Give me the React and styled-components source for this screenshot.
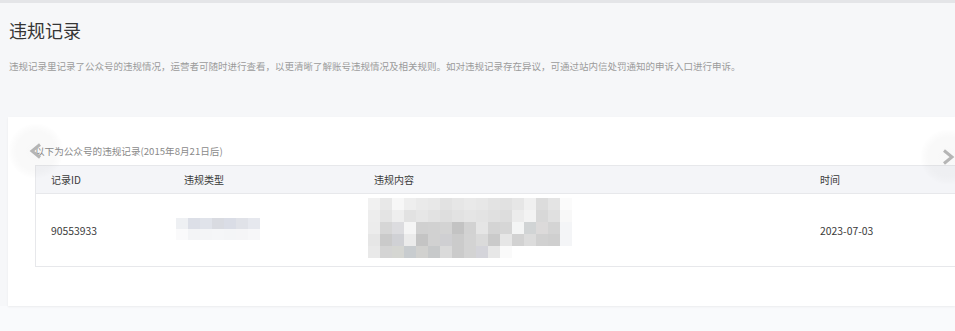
import React from "react";
import styled, { createGlobalStyle } from "styled-components";

const GlobalStyle = createGlobalStyle`
  html, body {
    margin: 0;
    padding: 0;
    background: #f6f7f9;
  }
  body {
    font-family: "Open Sans", "Noto Sans CJK SC", sans-serif;
    color: #333;
  }
`;

const Page = styled.div`
  width: 955px;
  height: 331px;
  overflow: hidden;
  display: flex;
  flex-direction: column;
  background: #f6f7f9;
  border-top: 3px solid #e4e5e8;
  box-sizing: border-box;
`;

const Header = styled.header`
  padding: 15px 0 0 9px;
  height: 114px;
  box-sizing: border-box;
`;

const Title = styled.h1`
  margin: 0;
  font-size: 18px;
  line-height: 24px;
  font-weight: 400;
  color: #353535;
  font-family: "Noto Sans CJK SC", sans-serif;
`;

const Desc = styled.p`
  margin: 17px 0 0;
  font-size: 9.5px;
  line-height: 14px;
  color: #9b9b9b;
  font-family: "Noto Sans CJK SC", sans-serif;
  white-space: nowrap;
`;

const Card = styled.section`
  position: relative;
  margin-left: 8px;
  background: #fff;
  padding: 27px 0 39px 27px;
  box-shadow: 0 1px 2px rgba(0, 0, 0, 0.06);
`;

const Caption = styled.div`
  font-size: 9.6px;
  line-height: 14px;
  color: #8a8a8a;
  margin-bottom: 7px;
  font-family: "Noto Sans CJK SC", sans-serif;
`;

const Table = styled.div`
  border: 1px solid #e7e8eb;
  border-right: none;
  font-size: 10px;
  color: #3a3a3a;
`;

const Row = styled.div`
  display: grid;
  grid-template-columns: 133px 190px 446px 1fr;
  align-items: center;
  height: ${(p) => (p.$head ? "27px" : "72px")};
  background: ${(p) => (p.$head ? "#f4f5f8" : "#fff")};
  border-bottom: ${(p) => (p.$head ? "1px solid #e7e8eb" : "none")};
`;

const Cell = styled.div`
  padding-left: ${(p) => p.$pad || 15}px;
  font-family: "Noto Sans CJK SC", sans-serif;
  font-size: ${(p) => (p.$num ? "10.4px" : "10px")};
`;

const Mosaic = styled.div`
  display: grid;
  grid-template-columns: repeat(${(p) => p.$cols}, 12px);
  grid-auto-rows: ${(p) => p.$h}px;
  margin-left: ${(p) => p.$ml || 0}px;
  margin-top: ${(p) => p.$mt || 0}px;
`;

const Tile = styled.span`
  display: block;
`;

const Footer = styled.div`
  flex: 1;
  background: #f9fafc;
`;

const Nav = styled.div`
  position: absolute;
  top: ${(p) => p.$top}px;
  left: ${(p) => p.$left}px;
  width: 56px;
  height: 56px;
  border-radius: 50%;
  background: radial-gradient(
    circle,
    rgba(0, 0, 0, 0.028) 0%,
    rgba(0, 0, 0, 0.025) 50%,
    rgba(0, 0, 0, 0.012) 62%,
    rgba(0, 0, 0, 0) 71%
  );
  display: flex;
  align-items: center;
  justify-content: center;
`;

const typeShades = [
  ["#eef0f3", "#dcdfe7", "#e0e3ea", "#d9dbe1", "#dadde6", "#e0e2e8", "#e6e8ee"],
  ["#fafafb", "#f3f4f6", "#f4f5f7", "#f5f6f8", "#f4f5f7", "#f5f5f7", "#f7f7f9"],
];

const contentShades = [
  ["#f1f1f1", "#e8e8e8", "#f7f7f7", "#eeeeee", "#eaeaea", "#e8e8e8", "#e2e2e2", "#e6e6e6", "#e9e9e9", "#e7e7e7", "#e3e3e3", "#e1e1e1", "#e6e6e6", "#f0f0f0", "#dcdcdc", "#e4e4e4", "#fbfbfb", "#fff"],
  ["#ededed", "#e4e4e4", "#eeeeee", "#e2e2e2", "#e6e6e6", "#e2e2e2", "#dedede", "#e2e2e2", "#e5e5e5", "#e3e3e3", "#e0e0e0", "#dddddd", "#ececec", "#f3f3f3", "#d8d8d8", "#e0e0e0", "#f8f8f8", "#fff"],
  ["#ececec", "#d6d6d6", "#dcdcdf", "#f5f5f5", "#d0d0d0", "#d1d1d1", "#d3d3d3", "#c3c3c3", "#d2d2d2", "#e5e5e5", "#d4d4d4", "#d6d6d6", "#f4f5f5", "#d1d4d5", "#dcdada", "#d4d4d4", "#f4f5f7", "#fff"],
  ["#e6e6e6", "#cacaca", "#d0d1d5", "#ebebeb", "#c4c4c4", "#d1d1d1", "#cfcfd2", "#cbcbcb", "#d3d3d3", "#dadada", "#cacaca", "#e6e6e6", "#d2d2d2", "#dcdcdc", "#d1d1d1", "#cfcfcf", "#f4f5f7", "#fff"],
  ["#e9e9e9", "#d4d4d4", "#d5d6d2", "#c8cccf", "#d1d1cf", "#c7c9ca", "#dadada", "#cbcbcb", "#d3d3d3", "#d4d4da", "#e7e7e7", "#fafafa", "#fff", "#fff", "#fff", "#fff", "#fff", "#fff"],
];

const Chevron = ({ dir }) => (
  <svg width="14" height="16" viewBox="0 0 14 16">
    <polyline
      points={dir === "left" ? "11,1.5 3,8 11,14.5" : "3,1.5 11,8 3,14.5"}
      fill="none"
      stroke="#b5b5b5"
      strokeWidth="3"
      strokeLinejoin="miter"
    />
  </svg>
);

function renderMosaic(shades, h, ml, mt) {
  return (
    <Mosaic $cols={shades[0].length} $h={h} $ml={ml} $mt={mt}>
      {shades.flatMap((row, r) =>
        row.map((c, i) => <Tile key={`${r}-${i}`} style={{ background: c }} />)
      )}
    </Mosaic>
  );
}

function App() {
  return (
    <>
      <GlobalStyle />
      <Page>
        <Header>
          <Title>违规记录</Title>
          <Desc>
            违规记录里记录了公众号的违规情况，运营者可随时进行查看，以更清晰了解账号违规情况及相关规则。如对违规记录存在异议，可通过站内信处罚通知的申诉入口进行申诉。
          </Desc>
        </Header>
        <Card>
          <Caption>以下为公众号的违规记录(2015年8月21日后)</Caption>
          <Table>
            <Row $head>
              <Cell>记录ID</Cell>
              <Cell>违规类型</Cell>
              <Cell>违规内容</Cell>
              <Cell>时间</Cell>
            </Row>
            <Row>
              <Cell $num>90553933</Cell>
              <Cell $pad={7}>{renderMosaic(typeShades, 11, 0, -2)}</Cell>
              <Cell $pad={9}>{renderMosaic(contentShades, 12, 0, -4)}</Cell>
              <Cell $num>2023-07-03</Cell>
            </Row>
          </Table>
          <Nav $top={6} $left={0}>
            <Chevron dir="left" />
          </Nav>
          <Nav $top={12} $left={912}>
            <Chevron dir="right" />
          </Nav>
        </Card>
        <Footer />
      </Page>
    </>
  );
}

export default App;
